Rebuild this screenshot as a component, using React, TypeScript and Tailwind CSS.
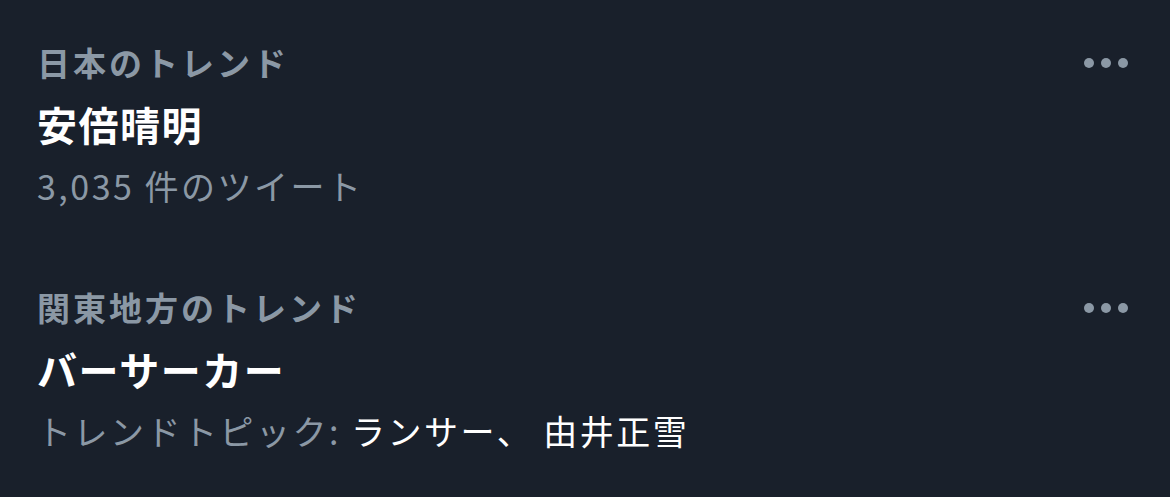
import { MoreHorizontal } from 'lucide-react';

interface Trend {
    context: string;
    title: string;
    meta: React.ReactNode;
}

const trends: Trend[] = [
    {
        context: '日本のトレンド',
        title: '安倍晴明',
        meta: <span className="text-[#8b98a5]">3,035 件のツイート</span>,
    },
    {
        context: '関東地方のトレンド',
        title: 'バーサーカー',
        meta: (
            <>
                <span className="text-[#8b98a5]">トレンドトピック: </span>
                <span className="text-white">ランサー、 由井正雪</span>
            </>
        ),
    },
];

function Dots() {
    return (
        <div className="flex items-center gap-[7px] pt-[2px]">
            <span className="block w-[10px] h-[10px] rounded-full bg-[#8b98a5]" />
            <span className="block w-[10px] h-[10px] rounded-full bg-[#8b98a5]" />
            <span className="block w-[10px] h-[10px] rounded-full bg-[#8b98a5]" />
        </div>
    );
}

export default function App() {
    return (
        <div
            className="w-[1170px] h-[497px] bg-[#19202b] overflow-hidden"
            style={{ fontFamily: '"Noto Sans CJK JP", "Noto Sans", sans-serif' }}
        >
            {trends.map(t => (
                <div key={t.title} className="flex justify-between pl-[37px] pr-[42px] pt-[31px] pb-[28px]">
                    <div className="flex flex-col">
                        <div className="text-[33px] leading-[62px] font-bold tracking-[3px] text-[#8b98a5]">{t.context}</div>
                        <div className="text-[40px] leading-[62px] font-bold tracking-[1.5px] text-white">{t.title}</div>
                        <div className="text-[34px] leading-[62px] font-normal tracking-[2.5px]">{t.meta}</div>
                    </div>
                    <div className="h-[62px] flex items-center">
                        <Dots />
                    </div>
                </div>
            ))}
        </div>
    );
}
